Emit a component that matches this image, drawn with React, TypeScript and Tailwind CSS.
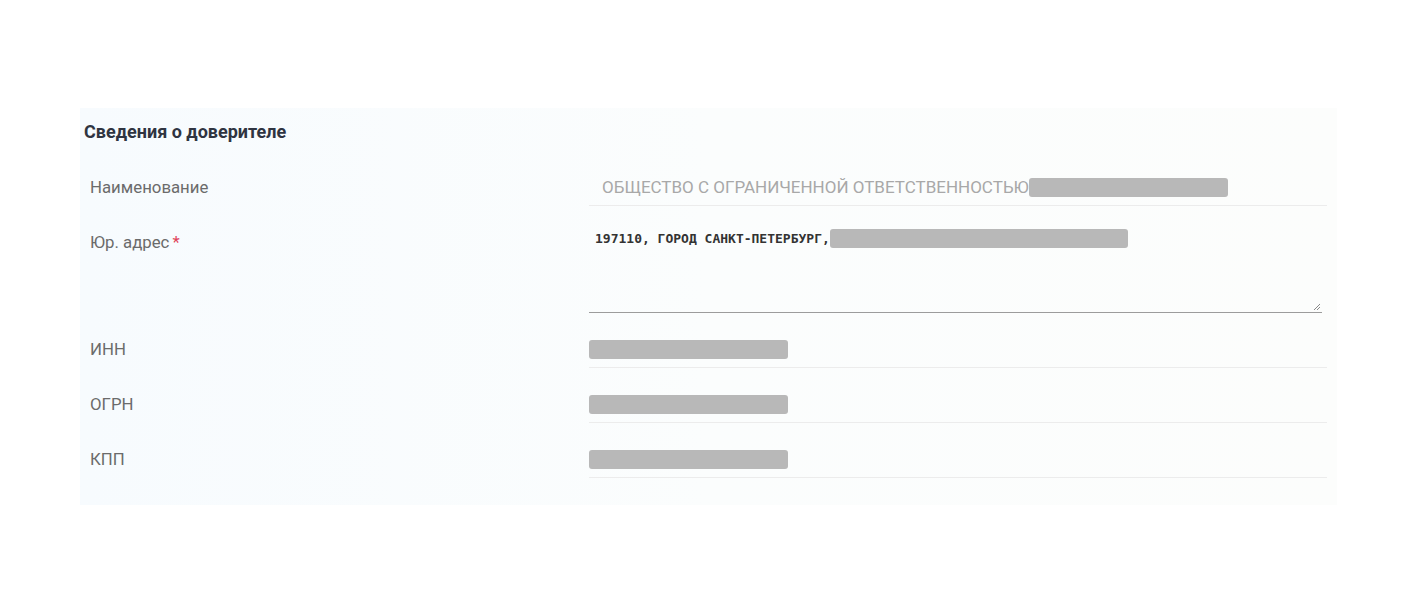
import React from "react";

const Box = ({ w = 199 }: { w?: number }) => (
  <span
    className="inline-block h-[19px] shrink-0 rounded-[3px] bg-[#b8b8b8] align-middle"
    style={{ width: w }}
  />
);

const Label = ({ children }: { children: React.ReactNode }) => (
  <div className="flex h-[36px] w-[509px] shrink-0 items-center pl-[10px] text-[16.8px] text-[#6b6b6b]">
    {children}
  </div>
);

export default function App() {
  return (
    <div className="min-h-[615px] w-[1418px] bg-white pt-[108px] font-['Roboto','Liberation_Sans',sans-serif]">
      <div className="ml-[80px] h-[397px] w-[1257px] bg-gradient-to-r from-[#f7fbfe] via-[#fbfdfd] to-[#fcfdfc]">
        <div className="flex h-[46px] items-center pl-[4px] text-[18px] font-bold text-[#2f3441]">
          Сведения о доверителе
        </div>
        <div className="mt-[16px] flex flex-col gap-[19px]">
          <div className="flex">
            <Label>Наименование</Label>
            <div className="flex h-[36px] w-[738px] items-center border-b border-[#ececec] pl-[13px]">
              <span className="whitespace-nowrap text-[17px] text-[#a8a8a8]">
                ОБЩЕСТВО С ОГРАНИЧЕННОЙ ОТВЕТСТВЕННОСТЬЮ
              </span>
              <Box />
            </div>
          </div>
          <div className="flex">
            <Label>
              Юр. адрес<span className="ml-[3px] text-[#e0435a]">*</span>
            </Label>
            <div className="relative h-[88px] w-[733px] border-b-[1.5px] border-[#9c9c9c] pl-[6px] pt-[4px]">
              <div className="flex items-center whitespace-nowrap font-['DejaVu_Sans_Mono','Liberation_Mono',monospace] text-[13px] font-bold text-[#333]">
                <span>197110, ГОРОД САНКТ-ПЕТЕРБУРГ,</span>
                <Box w={298} />
              </div>
              <svg
                className="absolute bottom-[1px] right-[1px]"
                width="8"
                height="8"
                viewBox="0 0 8 8"
              >
                <path d="M7 1 L1 7 M7 4 L4 7" stroke="#8a8a8a" strokeWidth="1" />
              </svg>
            </div>
          </div>
          {["ИНН", "ОГРН", "КПП"].map((l) => (
            <div className="flex" key={l}>
              <Label>{l}</Label>
              <div className="flex h-[36px] w-[738px] items-center border-b border-[#ececec]">
                <Box />
              </div>
            </div>
          ))}
        </div>
      </div>
    </div>
  );
}
